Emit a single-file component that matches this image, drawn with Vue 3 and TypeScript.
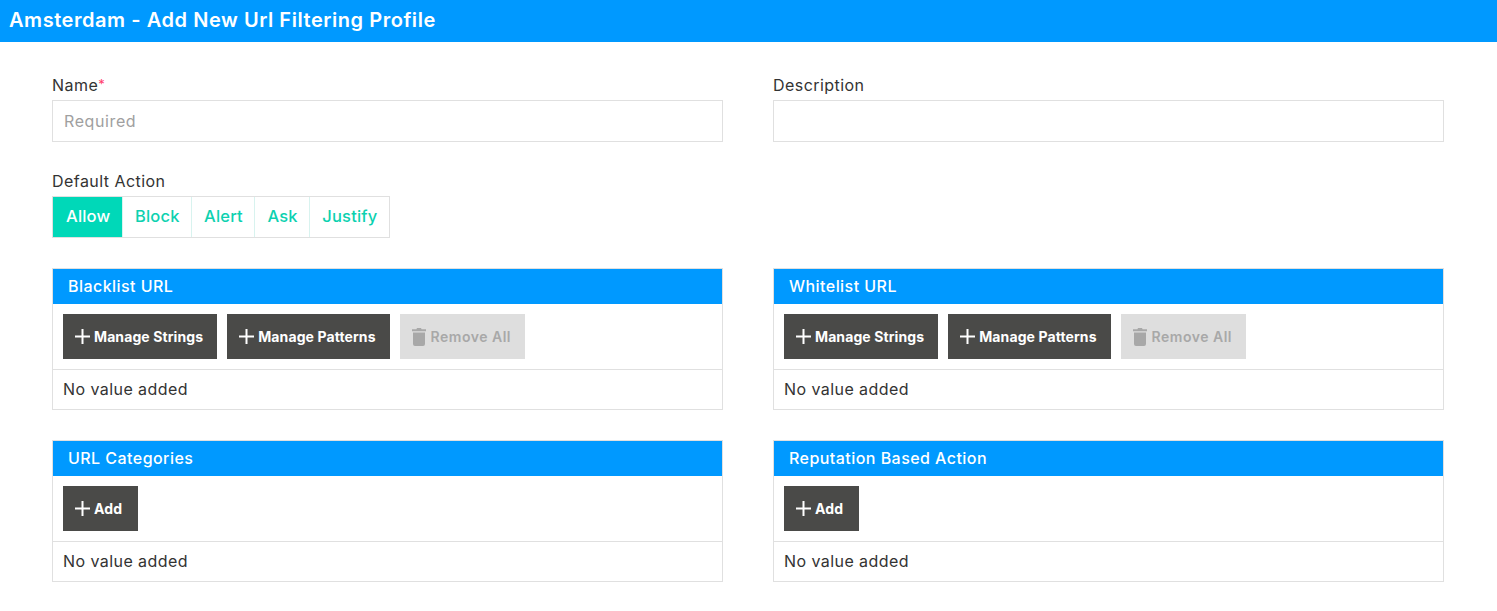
<template>
  <div class="page">
    <header class="top-bar">Amsterdam - Add New Url Filtering Profile</header>

    <div class="content">
      <div class="row">
        <div class="field">
          <label class="field-label">Name<span class="req">*</span></label>
          <input class="text-input" type="text" placeholder="Required" />
        </div>
        <div class="field">
          <label class="field-label">Description</label>
          <input class="text-input" type="text" />
        </div>
      </div>

      <div class="field action-field">
        <label class="field-label">Default Action</label>
        <div class="segments">
          <button
            v-for="action in actions"
            :key="action"
            class="segment"
            :class="{ active: action === selectedAction }"
            @click="selectedAction = action"
          >
            {{ action }}
          </button>
        </div>
      </div>

      <div class="panels">
        <section v-for="panel in panels" :key="panel.title" class="panel">
          <h2 class="panel-title">{{ panel.title }}</h2>
          <div class="toolbar">
            <button v-for="label in panel.buttons" :key="label" class="btn">
              <svg class="plus" viewBox="0 0 15 15" width="15" height="15">
                <path d="M7.5 0v15M0 7.5h15" stroke="currentColor" stroke-width="2" fill="none" />
              </svg>
              {{ label }}
            </button>
            <button v-if="panel.removable" class="btn btn-disabled">
              <svg class="trash" viewBox="0 0 14 18" width="14" height="18">
                <path fill="currentColor" d="M5 0h4l.6 1.2H14v2H0v-2h4.4zM1 4.5h12V16a2 2 0 0 1-2 2H3a2 2 0 0 1-2-2z" />
              </svg>
              Remove All
            </button>
          </div>
          <div class="empty">No value added</div>
        </section>
      </div>
    </div>
  </div>
</template>

<script setup lang="ts">
import { ref } from 'vue'

interface Panel {
  title: string
  buttons: string[]
  removable: boolean
}

const actions = ['Allow', 'Block', 'Alert', 'Ask', 'Justify']
const selectedAction = ref('Allow')

const urlButtons = ['Manage Strings', 'Manage Patterns']

const panels: Panel[] = [
  { title: 'Blacklist URL', buttons: urlButtons, removable: true },
  { title: 'Whitelist URL', buttons: urlButtons, removable: true },
  { title: 'URL Categories', buttons: ['Add'], removable: false },
  { title: 'Reputation Based Action', buttons: ['Add'], removable: false },
]
</script>

<style scoped>
.page {
  min-height: 611px;
  background: #fff;
  color: #333;
  font-family: Inter, "Open Sans", "Liberation Sans", sans-serif;
}

.top-bar {
  height: 42px;
  line-height: 41px;
  padding-left: 9px;
  background: #0099ff;
  color: #fff;
  font-size: 20px;
  font-weight: 600;
  letter-spacing: 0.55px;
}

.content {
  padding: 34px 53px 0 52px;
}

.row,
.panels {
  display: grid;
  grid-template-columns: 671px 671px;
  column-gap: 50px;
}

.field {
  display: flex;
  flex-direction: column;
}

.field-label {
  height: 24px;
  line-height: 18px;
  font-size: 16px;
  letter-spacing: 0.45px;
  color: #333;
}

.req {
  color: #ff3b6b;
  font-size: 13px;
  line-height: 0;
  vertical-align: 2px;
}

.text-input {
  box-sizing: border-box;
  height: 42px;
  padding: 0 11px;
  border: 1px solid #e0e0e0;
  outline: none;
  font-family: inherit;
  font-size: 16px;
  letter-spacing: 0.6px;
  color: #333;
}

.text-input::placeholder {
  color: #a0a0a0;
  opacity: 1;
}

.action-field {
  margin-top: 30px;
}

.segments {
  display: flex;
  align-self: flex-start;
  height: 42px;
  box-sizing: border-box;
  border: 1px solid #e0e0e0;
}

.segment {
  padding: 0 11.5px 2px 12px;
  border: none;
  border-left: 1px solid #d8f3ef;
  background: #fff;
  color: #0dd1b0;
  font-family: inherit;
  font-size: 16.5px;
  font-weight: 500;
  letter-spacing: 0.2px;
}

.segment:first-child {
  padding-left: 13px;
  border-left: none;
}

.segment.active {
  background: #00d8b8;
  color: #fff;
}

.panels {
  margin-top: 30px;
  row-gap: 30px;
}

.panel {
  border: 1px solid #e0e0e0;
}

.panel-title {
  margin: 0;
  height: 35px;
  line-height: 35px;
  padding-left: 15px;
  background: #0099ff;
  color: #fff;
  font-size: 16px;
  font-weight: 500;
  letter-spacing: 0.45px;
}

.toolbar {
  display: flex;
  gap: 10px;
  padding: 10px;
  border-bottom: 1px solid #e0e0e0;
}

.btn {
  display: flex;
  align-items: center;
  gap: 4px;
  min-width: 75px;
  height: 45px;
  padding: 0 14px 0 12px;
  border: none;
  background: #4a4a48;
  color: #fff;
  font-family: inherit;
  font-size: 14px;
  font-weight: 700;
  letter-spacing: 0.1px;
}

.btn-disabled {
  gap: 5px;
  background: #dedede;
  color: #a8a8a8;
  font-weight: 600;
  letter-spacing: 0.5px;
}

.empty {
  height: 39px;
  line-height: 38px;
  padding-left: 10px;
  font-size: 16px;
  letter-spacing: 0.43px;
}
</style>
